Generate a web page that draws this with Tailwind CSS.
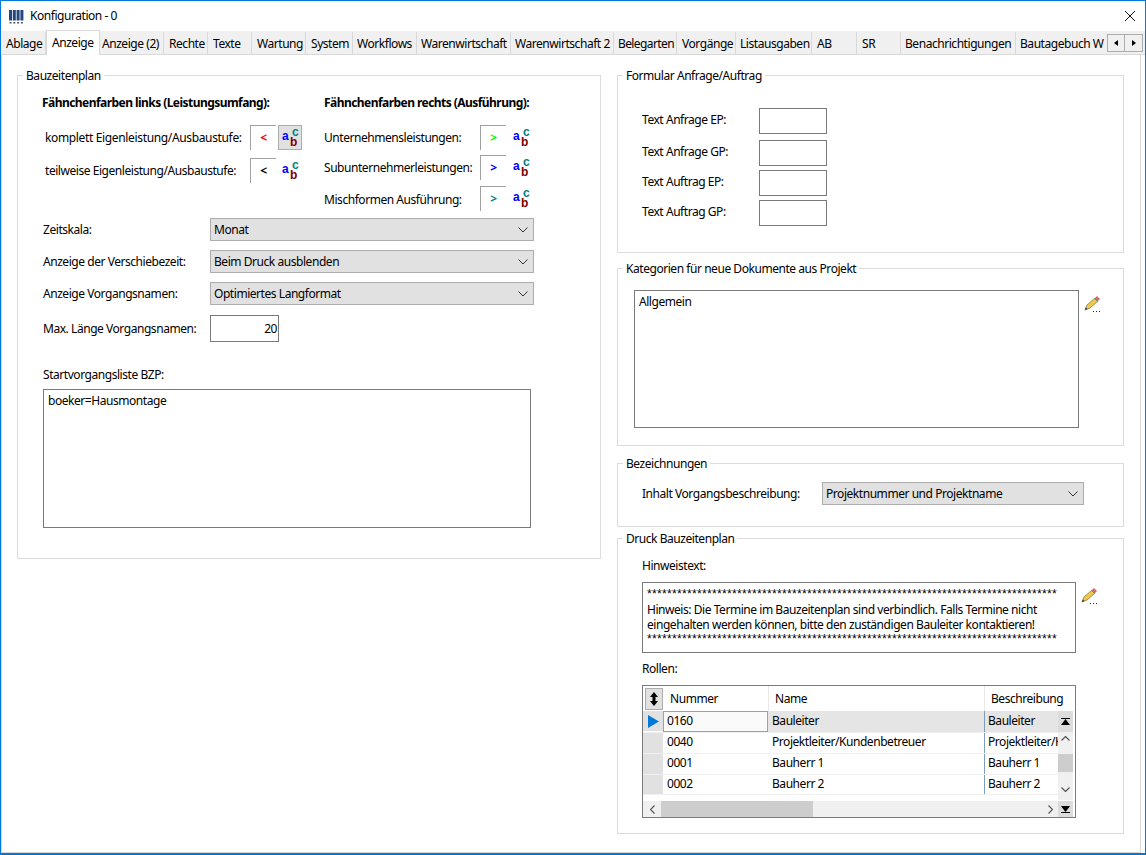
<!DOCTYPE html>
<html lang="de">
<head>
  <meta charset="UTF-8">
  <title>Konfiguration - 0</title>
  <script src="https://cdn.jsdelivr.net/npm/@tailwindcss/browser@4"></script>
</head>
<body class="bg-white">
  <div class="w-[1146px] h-[855px] overflow-hidden flex flex-col bg-white border border-[#0078d7] border-b-2 font-['Noto_Sans',sans-serif] text-[12px] leading-[16px] tracking-[-0.45px] text-black">

    <!-- Title bar -->
    <div class="h-[30px] flex items-center shrink-0 pl-[8px] pr-[9px]">
      <svg width="15" height="15" viewBox="0 0 15 15" class="mr-[6px]">
        <path d="M0 1h3v10.500H0zM3.800 1h3v10.500h-3zM7.600 1h3v10.500h-3zM11.400 1h3v10.500h-3z" fill="#24487c"/>
        <path d="M.5 13h2v1.500h-2zM4.300 13h2v1.500h-2zM8.100 13h2v1.500h-2zM11.900 13h2v1.500h-2z" fill="#555"/>
      </svg>
      <span>Konfiguration - 0</span>
      <svg width="12" height="12" viewBox="0 0 12 12" class="ml-auto" fill="none" stroke="#111" stroke-width="1"><path d="M1 1l10 10M11 1L1 11"/></svg>
    </div>

    <!-- Tabs -->
    <div class="h-[24px] shrink-0 bg-[#f0f0f0] flex items-end pl-[1px] relative border-b border-[#d9d9d9]">
      <div class="w-[44px] h-[22px] pl-[4px] pt-[4px] border-r border-[#d9d9d9] overflow-hidden whitespace-nowrap">Ablage</div>
      <div class="w-[54px] h-[25px] -mb-[1px] pl-[5px] pt-[4px] bg-white border border-b-0 border-[#d9d9d9] overflow-hidden whitespace-nowrap">Anzeige</div>
      <div class="w-[64px] h-[22px] pl-[2px] pt-[4px] border-r border-[#d9d9d9] overflow-hidden whitespace-nowrap">Anzeige (2)</div>
      <div class="w-[44px] h-[22px] pl-[5px] pt-[4px] border-r border-[#d9d9d9] overflow-hidden whitespace-nowrap">Rechte</div>
      <div class="w-[44px] h-[22px] pl-[5px] pt-[4px] border-r border-[#d9d9d9] overflow-hidden whitespace-nowrap">Texte</div>
      <div class="w-[54px] h-[22px] pl-[5px] pt-[4px] border-r border-[#d9d9d9] overflow-hidden whitespace-nowrap">Wartung</div>
      <div class="w-[47px] h-[22px] pl-[5px] pt-[4px] border-r border-[#d9d9d9] overflow-hidden whitespace-nowrap">System</div>
      <div class="w-[64px] h-[22px] pl-[4px] pt-[4px] border-r border-[#d9d9d9] overflow-hidden whitespace-nowrap">Workflows</div>
      <div class="w-[94px] h-[22px] pl-[4px] pt-[4px] border-r border-[#d9d9d9] overflow-hidden whitespace-nowrap">Warenwirtschaft</div>
      <div class="w-[103px] h-[22px] pl-[4px] pt-[4px] border-r border-[#d9d9d9] overflow-hidden whitespace-nowrap">Warenwirtschaft 2</div>
      <div class="w-[63px] h-[22px] pl-[4px] pt-[4px] border-r border-[#d9d9d9] overflow-hidden whitespace-nowrap tracking-[-0.6px]">Belegarten</div>
      <div class="w-[59px] h-[22px] pl-[5px] pt-[4px] border-r border-[#d9d9d9] overflow-hidden whitespace-nowrap">Vorgänge</div>
      <div class="w-[76px] h-[22px] pl-[4px] pt-[4px] border-r border-[#d9d9d9] overflow-hidden whitespace-nowrap">Listausgaben</div>
      <div class="w-[45px] h-[22px] pl-[5px] pt-[4px] border-r border-[#d9d9d9] overflow-hidden whitespace-nowrap">AB</div>
      <div class="w-[44px] h-[22px] pl-[5px] pt-[4px] border-r border-[#d9d9d9] overflow-hidden whitespace-nowrap">SR</div>
      <div class="w-[115px] h-[22px] pl-[4px] pt-[4px] border-r border-[#d9d9d9] overflow-hidden whitespace-nowrap">Benachrichtigungen</div>
      <div class="w-[90px] h-[22px] pl-[4px] pt-[4px] overflow-hidden whitespace-nowrap">Bautagebuch W</div>
      <div class="absolute left-[1106px] top-[3px] flex">
        <div class="w-[18px] h-[18px] bg-[#f0f0f0] border border-[#adadad] flex items-center justify-center">
          <svg width="4" height="6" viewBox="0 0 4 6"><path d="M4 0v6L0 3z" fill="#000"/></svg>
        </div>
        <div class="w-[18px] h-[18px] bg-[#f0f0f0] border border-l-0 border-[#adadad] flex items-center justify-center">
          <svg width="4" height="6" viewBox="0 0 4 6"><path d="M0 0v6l4-3z" fill="#000"/></svg>
        </div>
      </div>
    </div>

    <!-- Content -->
    <div class="flex-1 w-[1140px] flex pl-[15px] pt-[12px] border-x border-b border-[#d9d9d9]">

      <!-- Left column -->
      <fieldset class="w-[584px] h-[492px] border border-[#dcdcdc]">
        <legend class="ml-[5px] px-[3px] relative top-[1px]">Bauzeitenplan</legend>

        <div class="flex">
          <div class="w-[306px]">
            <div class="mt-[12px] pl-[24px] font-bold tracking-[-0.55px]">Fähnchenfarben links (Leistungsumfang):</div>
            <div class="mt-[14px] h-[25px] pl-[27px] flex items-center">
              <span class="w-[205px] tracking-[-0.35px]">komplett Eigenleistung/Ausbaustufe:</span>
              <div class="w-[26px] h-[25px] border-t border-l border-[#a0a0a0] flex items-center justify-center font-bold text-[#ff0000]">&lt;</div>
              <div class="ml-[2px] w-[24px] h-[25px] pl-[2px] bg-[#e1e1e1] border border-[#adadad] flex items-center justify-center">
                <svg width="18" height="20" viewBox="0 0 18 20" font-family="Liberation Sans" font-weight="700" font-size="12" letter-spacing="0"><text x="0" y="12" fill="#0000ff">a</text><text x="8" y="18" fill="#800000">b</text><text x="10" y="8" fill="#008080">c</text></svg>
              </div>
            </div>
            <div class="mt-[8px] h-[25px] pl-[27px] flex items-center">
              <span class="w-[205px]">teilweise Eigenleistung/Ausbaustufe:</span>
              <div class="w-[26px] h-[25px] border-t border-l border-[#a0a0a0] flex items-center justify-center font-bold text-black">&lt;</div>
              <div class="ml-[2px] w-[24px] h-[25px] pl-[2px] flex items-center justify-center">
                <svg width="18" height="20" viewBox="0 0 18 20" font-family="Liberation Sans" font-weight="700" font-size="12" letter-spacing="0"><text x="0" y="12" fill="#0000ff">a</text><text x="8" y="18" fill="#800000">b</text><text x="10" y="8" fill="#008080">c</text></svg>
              </div>
            </div>
          </div>
          <div>
            <div class="mt-[12px] font-bold tracking-[-0.55px]">Fähnchenfarben rechts (Ausführung):</div>
            <div class="mt-[14px] h-[25px] flex items-center">
              <span class="w-[156px]">Unternehmensleistungen:</span>
              <div class="w-[26px] h-[25px] border-t border-l border-[#a0a0a0] flex items-center justify-center font-bold text-[#00ff00]">&gt;</div>
              <svg width="18" height="20" viewBox="0 0 18 20" class="ml-[7px]" font-family="Liberation Sans" font-weight="700" font-size="12" letter-spacing="0"><text x="0" y="12" fill="#0000ff">a</text><text x="8" y="18" fill="#800000">b</text><text x="10" y="8" fill="#008080">c</text></svg>
            </div>
            <div class="mt-[5px] h-[25px] flex items-center">
              <span class="w-[156px]">Subunternehmerleistungen:</span>
              <div class="w-[26px] h-[25px] border-t border-l border-[#a0a0a0] flex items-center justify-center font-bold text-[#0000ff]">&gt;</div>
              <svg width="18" height="20" viewBox="0 0 18 20" class="ml-[7px]" font-family="Liberation Sans" font-weight="700" font-size="12" letter-spacing="0"><text x="0" y="12" fill="#0000ff">a</text><text x="8" y="18" fill="#800000">b</text><text x="10" y="8" fill="#008080">c</text></svg>
            </div>
            <div class="mt-[6px] h-[25px] flex items-center">
              <span class="w-[156px] pt-[2px]">Mischformen Ausführung:</span>
              <div class="w-[26px] h-[25px] border-t border-l border-[#a0a0a0] flex items-center justify-center font-bold text-[#008080]">&gt;</div>
              <svg width="18" height="20" viewBox="0 0 18 20" class="ml-[7px]" font-family="Liberation Sans" font-weight="700" font-size="12" letter-spacing="0"><text x="0" y="12" fill="#0000ff">a</text><text x="8" y="18" fill="#800000">b</text><text x="10" y="8" fill="#008080">c</text></svg>
            </div>
          </div>
        </div>

        <div class="mt-[7px] pl-[25px] flex items-center">
          <span class="w-[167px]">Zeitskala:</span>
          <div class="w-[324px] h-[23px] bg-[#e1e1e1] border border-[#adadad] pl-[3px] pr-[5px] flex items-center justify-between">
            <span>Monat</span>
            <svg width="10" height="6" viewBox="0 0 10 6" fill="none" stroke="#333"><path d="M.5.500L5 5 9.500.500"/></svg>
          </div>
        </div>
        <div class="mt-[9px] pl-[25px] flex items-center">
          <span class="w-[167px]">Anzeige der Verschiebezeit:</span>
          <div class="w-[324px] h-[23px] bg-[#e1e1e1] border border-[#adadad] pl-[3px] pr-[5px] flex items-center justify-between">
            <span>Beim Druck ausblenden</span>
            <svg width="10" height="6" viewBox="0 0 10 6" fill="none" stroke="#333"><path d="M.5.500L5 5 9.500.500"/></svg>
          </div>
        </div>
        <div class="mt-[9px] pl-[25px] flex items-center">
          <span class="w-[167px]">Anzeige Vorgangsnamen:</span>
          <div class="w-[324px] h-[23px] bg-[#e1e1e1] border border-[#adadad] pl-[3px] pr-[5px] flex items-center justify-between">
            <span>Optimiertes Langformat</span>
            <svg width="10" height="6" viewBox="0 0 10 6" fill="none" stroke="#333"><path d="M.5.500L5 5 9.500.500"/></svg>
          </div>
        </div>
        <div class="mt-[10px] pl-[25px] flex items-center">
          <span class="w-[167px]">Max. Länge Vorgangsnamen:</span>
          <input value="20" class="w-[69px] h-[27px] border border-[#7a7a7a] text-right pr-[1px] outline-none">
        </div>
        <div class="mt-[25px] pl-[25px]">Startvorgangsliste BZP:</div>
        <div class="mt-[6px] ml-[25px] w-[488px] h-[139px] border border-[#7a7a7a] pl-[4px] pt-[3px]">boeker=Hausmontage</div>
      </fieldset>

      <!-- Right column -->
      <div class="ml-[16px] w-[507px] flex flex-col">
        <fieldset class="h-[186px] border border-[#dcdcdc]">
          <legend class="ml-[5px] px-[3px] relative top-[1px]">Formular Anfrage/Auftrag</legend>
          <div class="mt-[25px] pl-[24px] flex items-center">
            <span class="w-[117px] pb-[2px]">Text Anfrage EP:</span>
            <div class="w-[68px] h-[26px] border border-[#7a7a7a]"></div>
          </div>
          <div class="mt-[6px] pl-[24px] flex items-center">
            <span class="w-[117px] pb-[2px]">Text Anfrage GP:</span>
            <div class="w-[68px] h-[26px] border border-[#7a7a7a]"></div>
          </div>
          <div class="mt-[4px] pl-[24px] flex items-center">
            <span class="w-[117px] pb-[2px]">Text Auftrag EP:</span>
            <div class="w-[68px] h-[26px] border border-[#7a7a7a]"></div>
          </div>
          <div class="mt-[4px] pl-[24px] flex items-center">
            <span class="w-[117px] pb-[2px]">Text Auftrag GP:</span>
            <div class="w-[68px] h-[26px] border border-[#7a7a7a]"></div>
          </div>
        </fieldset>

        <fieldset class="mt-[7px] h-[186px] border border-[#dcdcdc]">
          <legend class="ml-[5px] px-[3px] relative top-[1px]">Kategorien für neue Dokumente aus Projekt</legend>
          <div class="mt-[14px] pl-[16px] flex items-start">
            <div class="w-[445px] h-[138px] border border-[#7a7a7a] pl-[4px] pt-[3px]">Allgemein</div>
            <svg width="18" height="18" viewBox="0 0 18 18" class="ml-[5px] mt-[5px]">
              <path d="M1 15l2-5 8-7 3 3-8 7z" fill="#f2c84b" stroke="#8a7a45" stroke-width=".8"/>
              <path d="M11 3l2-2 3 3-2 2z" fill="#d9667a"/>
              <path d="M10.500 3.500l3 3" stroke="#5b9a5b"/>
              <path d="M1 15l.8-2.500 1.800 1.500z" fill="#333"/>
              <path d="M9 16h1v1H9zM12 16h1v1h-1zM15 16h1v1h-1z" fill="#222"/>
            </svg>
          </div>
        </fieldset>

        <fieldset class="mt-[9px] h-[72px] border border-[#dcdcdc]">
          <legend class="ml-[5px] px-[3px] relative top-[1px]">Bezeichnungen</legend>
          <div class="mt-[11px] pl-[24px] flex items-center">
            <span class="w-[180px]">Inhalt Vorgangsbeschreibung:</span>
            <div class="w-[262px] h-[23px] bg-[#e1e1e1] border border-[#adadad] pl-[3px] pr-[5px] flex items-center justify-between">
              <span>Projektnummer und Projektname</span>
              <svg width="10" height="6" viewBox="0 0 10 6" fill="none" stroke="#333"><path d="M.5.500L5 5 9.500.500"/></svg>
            </div>
          </div>
        </fieldset>

        <fieldset class="mt-[3px] h-[304px] border border-[#dcdcdc]">
          <legend class="ml-[5px] px-[3px] relative top-[1px]">Druck Bauzeitenplan</legend>
          <div class="mt-[12px] pl-[24px]">Hinweistext:</div>
          <div class="mt-[8px] pl-[24px] flex items-start">
            <div class="w-[434px] h-[71px] border border-[#7a7a7a] pl-[4px] pt-[4px] leading-[15px] whitespace-nowrap overflow-hidden">
              <div class="font-['Liberation_Sans',sans-serif] tracking-[0.33px]">**********************************************************************************</div>
              <div>Hinweis: Die Termine im Bauzeitenplan sind verbindlich. Falls Termine nicht</div>
              <div>eingehalten werden können, bitte den zuständigen Bauleiter kontaktieren!</div>
              <div class="font-['Liberation_Sans',sans-serif] tracking-[0.33px]">**********************************************************************************</div>
            </div>
            <svg width="18" height="18" viewBox="0 0 18 18" class="ml-[5px] mt-[5px]">
              <path d="M1 15l2-5 8-7 3 3-8 7z" fill="#f2c84b" stroke="#8a7a45" stroke-width=".8"/>
              <path d="M11 3l2-2 3 3-2 2z" fill="#d9667a"/>
              <path d="M10.500 3.500l3 3" stroke="#5b9a5b"/>
              <path d="M1 15l.8-2.500 1.800 1.500z" fill="#333"/>
              <path d="M9 16h1v1H9zM12 16h1v1h-1zM15 16h1v1h-1z" fill="#222"/>
            </svg>
          </div>
          <div class="mt-[8px] pl-[24px]">Rollen:</div>

          <!-- Rollen grid -->
          <div class="mt-[8px] ml-[24px] w-[434px] h-[133px] border border-[#7a7a7a] flex flex-col">
            <div class="h-[25px] flex shrink-0">
              <div class="w-[21px] pl-[2px] pt-[2px]">
                <div class="w-[18px] h-[22px] bg-[#e1e1e1] border border-[#adadad] flex items-center justify-center">
                  <svg width="10" height="14" viewBox="0 0 10 14" fill="#000"><path d="M5 0l4 5H6.500v4H9l-4 5-4-5h2.500V5H1z"/></svg>
                </div>
              </div>
              <div class="w-[105px] pl-[6px] pt-[5px] border-r border-[#e8e8e8]">Nummer</div>
              <div class="w-[216px] pl-[6px] pt-[5px] border-r border-[#e8e8e8]">Name</div>
              <div class="pl-[6px] pt-[5px]">Beschreibung</div>
            </div>
            <div class="flex h-[89px]">
              <div class="w-[415px]">
                <div class="h-[21px] flex">
                  <div class="w-[20px] bg-[#e1e1e1] border-b border-white flex items-center justify-center">
                    <svg width="13" height="13" viewBox="0 0 13 13"><path d="M1 0l11 6.500L1 13z" fill="#0078d7"/></svg>
                  </div>
                  <div class="w-[105px] bg-[#fafafa] border border-[#a0a0a0] pl-[3px] leading-[18px]">0160</div>
                  <div class="w-[217px] bg-[#e5e5e5] border-r border-[#7f9db9] pl-[4px] leading-[20px]">Bauleiter</div>
                  <div class="w-[73px] bg-[#e5e5e5] pl-[3px] leading-[20px] overflow-hidden whitespace-nowrap">Bauleiter</div>
                </div>
                <div class="h-[21px] flex border-t border-[#f0f0f0]">
                  <div class="w-[20px] bg-[#e1e1e1]"></div>
                  <div class="w-[105px] pl-[4px] leading-[18px]">0040</div>
                  <div class="w-[217px] border-r border-[#7f9db9] pl-[4px] leading-[18px]">Projektleiter/Kundenbetreuer</div>
                  <div class="w-[73px] pl-[3px] leading-[18px] overflow-hidden whitespace-nowrap">Projektleiter/Kundenbetreuer</div>
                </div>
                <div class="h-[21px] flex border-t border-[#f0f0f0]">
                  <div class="w-[20px] bg-[#e1e1e1]"></div>
                  <div class="w-[105px] pl-[4px] leading-[18px]">0001</div>
                  <div class="w-[217px] border-r border-[#7f9db9] pl-[4px] leading-[18px]">Bauherr 1</div>
                  <div class="w-[73px] pl-[3px] leading-[18px] overflow-hidden whitespace-nowrap">Bauherr 1</div>
                </div>
                <div class="h-[21px] flex border-y border-[#f0f0f0]">
                  <div class="w-[20px] bg-[#e1e1e1]"></div>
                  <div class="w-[105px] pl-[4px] leading-[18px]">0002</div>
                  <div class="w-[217px] border-r border-[#7f9db9] pl-[4px] leading-[18px]">Bauherr 2</div>
                  <div class="w-[73px] pl-[3px] leading-[18px] overflow-hidden whitespace-nowrap">Bauherr 2</div>
                </div>
              </div>
              <div class="w-[15px] bg-[#f0f0f0] flex flex-col items-center">
                <div class="w-[15px] h-[21px] bg-[#dcdcdc] flex items-center justify-center">
                  <svg width="9" height="8" viewBox="0 0 9 8"><path d="M0 0h9v1H0zM4.500 1L9 7H0z" fill="#000"/></svg>
                </div>
                <svg width="9" height="5" viewBox="0 0 9 5" class="mt-[4px]" fill="none" stroke="#555" stroke-width="1.200"><path d="M.5 4.500l4-4 4 4"/></svg>
                <div class="w-[15px] h-[18px] bg-[#cdcdcd] mt-[13px]"></div>
                <svg width="9" height="5" viewBox="0 0 9 5" class="mt-[15px]" fill="none" stroke="#555" stroke-width="1.200"><path d="M.5.500l4 4 4-4"/></svg>
              </div>
            </div>
            <div class="h-[16px] mt-[1px] flex">
              <div class="w-[415px] bg-[#f0f0f0] flex items-center">
                <svg width="5" height="9" viewBox="0 0 5 9" class="ml-[7px]" fill="none" stroke="#555" stroke-width="1.200"><path d="M4.500.500l-4 4 4 4"/></svg>
                <div class="w-[152px] h-[16px] bg-[#cdcdcd] ml-[6px]"></div>
                <svg width="5" height="9" viewBox="0 0 5 9" class="ml-[235px]" fill="none" stroke="#555" stroke-width="1.200"><path d="M.5.500l4 4-4 4"/></svg>
              </div>
              <div class="w-[15px] bg-[#dcdcdc] flex items-center justify-center">
                <svg width="9" height="8" viewBox="0 0 9 8"><path d="M0 1h9L4.500 7zM0 7h9v1H0z" fill="#000"/></svg>
              </div>
            </div>
          </div>
        </fieldset>
      </div>
    </div>
  </div>
</body>
</html>
